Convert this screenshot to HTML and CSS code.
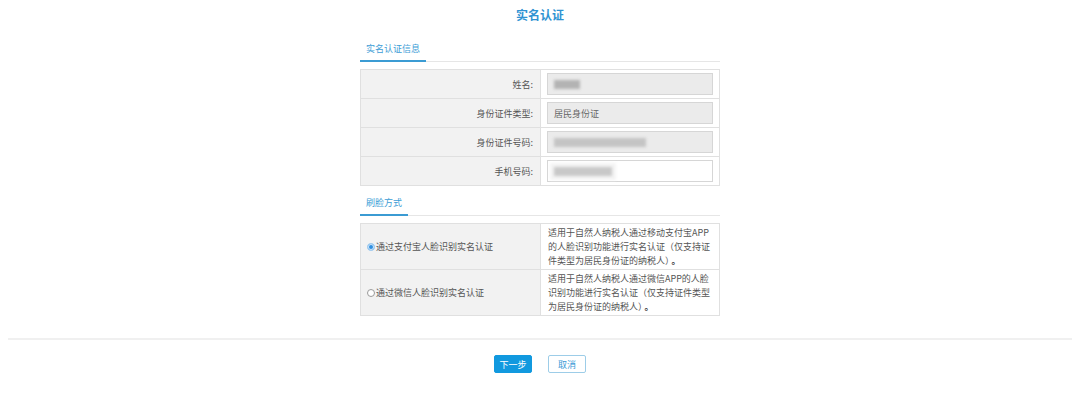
FILE: index.html
```html
<!DOCTYPE html>
<html lang="zh-CN">
<head>
<meta charset="utf-8">
<title>实名认证</title>
<link rel="stylesheet" href="styles.css">
</head>
<body>
<div class="page">
  <h1 class="title">实名认证</h1>
  <div class="panel">
    <div class="tabbar"><span class="tab">实名认证信息</span></div>
    <div class="grid-table info">
      <div class="row">
        <div class="label">姓名:</div>
        <div class="cell"><div class="input disabled"><span class="redact r-name"></span></div></div>
      </div>
      <div class="row">
        <div class="label">身份证件类型:</div>
        <div class="cell"><div class="input disabled"><span class="value">居民身份证</span></div></div>
      </div>
      <div class="row">
        <div class="label">身份证件号码:</div>
        <div class="cell"><div class="input disabled"><span class="redact r-id"></span></div></div>
      </div>
      <div class="row">
        <div class="label">手机号码:</div>
        <div class="cell"><div class="input"><span class="redact r-phone"></span></div></div>
      </div>
    </div>

    <div class="tabbar second"><span class="tab">刷脸方式</span></div>
    <div class="grid-table methods">
      <div class="row tall">
        <label class="option"><span class="radio checked"></span>通过支付宝人脸识别实名认证</label>
        <div class="desc">适用于自然人纳税人通过移动支付宝APP<br>的人脸识别功能进行实名认证（仅支持证<br>件类型为居民身份证的纳税人）<span class="stop">。</span></div>
      </div>
      <div class="row tall">
        <label class="option"><span class="radio"></span>通过微信人脸识别实名认证</label>
        <div class="desc">适用于自然人纳税人通过微信APP的人脸<br>识别功能进行实名认证（仅支持证件类型<br>为居民身份证的纳税人）<span class="stop">。</span></div>
      </div>
    </div>
  </div>
  <div class="divider"></div>
  <div class="actions">
    <button class="btn primary">下一步</button>
    <button class="btn ghost">取消</button>
  </div>
</div>
</body>
</html>
```

FILE: styles.css
```css
* { box-sizing: border-box; }
html, body { margin: 0; padding: 0; background: #fff; }
body {
  font-family: "Noto Sans CJK SC", "Noto Sans", "Liberation Sans", sans-serif;
  font-size: 9px;
  color: #555;
}
.page { width: 1080px; }
.title {
  margin: 0;
  padding-top: 7px;
  height: 23px;
  line-height: 16px;
  font-size: 12px;
  font-weight: bold;
  color: #2f93d2;
  text-align: center;
}
.panel {
  width: 360px;
  margin: 0 auto;
}
.tabbar {
  margin-top: 19px;
  border-bottom: 1px solid #e6e6e6;
  display: flex;
}
.tabbar.second { margin-top: 10px; }
.tab {
  display: block;
  line-height: 14px;
  padding: 0 6px 4px 6px;
  border-bottom: 2px solid #3b9bd3;
  margin-bottom: -1px;
  color: #3d9dd6;
  font-size: 9px;
}
.grid-table {
  margin-top: 7px;
  border: 1px solid #e0e0e0;
}
.row {
  display: grid;
  grid-template-columns: 180px 1fr;
  height: 29px;
  border-top: 1px solid #e0e0e0;
}
.row:first-child { border-top: none; height: 28px; }
.row.tall { height: 46px; }
.row.tall:first-child { height: 45px; }
.label {
  background: #f2f2f2;
  border-right: 1px solid #e0e0e0;
  text-align: right;
  padding-right: 7px;
  display: flex;
  align-items: center;
  justify-content: flex-end;
  color: #555;
}
.cell {
  display: flex;
  align-items: center;
  padding: 0 6px 0 6px;
}
.input {
  width: 166px;
  height: 22px;
  border: 1px solid #d6d6d6;
  background: #fff;
  display: flex;
  align-items: center;
  padding-left: 6px;
}
.input.disabled { background: #ebebeb; }
.value { color: #666; }
.redact {
  display: block;
  height: 9px;
  background: #b8b8b8;
  filter: blur(1.5px);
}
.r-name { width: 26px; background: #b3b3b3; }
.r-id { width: 92px; background: #c4c4c4; }
.r-phone { width: 58px; background: #c8c8c8; box-shadow: 0 0 0 4px #f4f4f4; }
.option {
  background: #f2f2f2;
  border-right: 1px solid #e0e0e0;
  display: flex;
  align-items: center;
  padding-left: 6px;
  color: #555;
}
.radio {
  width: 8px;
  height: 8px;
  border-radius: 50%;
  border: 1px solid #9a9a9a;
  background: #fff;
  margin-right: 1px;
  flex: none;
}
.radio.checked {
  border: 1px solid #a8cff0;
  background: #2f8fe0;
  box-shadow: inset 0 0 0 1px #cfe6fa;
}
.desc {
  padding: 0 6px 0 7px;
  line-height: 14px;
  display: flex;
  align-items: center;
  color: #555;
  white-space: nowrap;
}
.desc { display: block; padding-top: 2px; }
.stop { margin-left: 2px; font-weight: bold; color: #333; }
.divider {
  margin: 22px 8px 0 8px;
  height: 2px;
  background: #f0f0f0;
}
.actions {
  display: flex;
  justify-content: center;
  gap: 16px;
  margin-top: 15px;
}
.btn {
  width: 38px;
  height: 18px;
  padding: 0;
  font-family: inherit;
  font-size: 9px;
  border-radius: 2px;
  cursor: pointer;
}
.btn.primary {
  background: #1199df;
  border: 1px solid #1199df;
  color: #fff;
}
.btn.ghost {
  background: #fff;
  border: 1px solid #9dcde8;
  color: #3a9ad6;
}
```
